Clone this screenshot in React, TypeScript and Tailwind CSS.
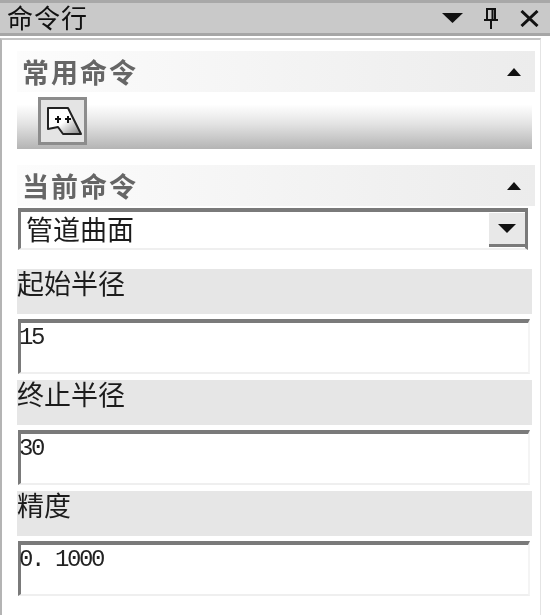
import React from 'react';

const cjk = "font-['Noto_Sans_CJK_SC','Noto_Sans',sans-serif]";

const fields = [
  { label: '起始半径', value: '15' },
  { label: '终止半径', value: '30' },
  { label: '精度', value: '0. 1000' },
];

function SectionHeader({ title }: { title: string }) {
  return (
    <div className="flex h-[41px] items-center justify-between bg-gradient-to-r from-[#fcfcfc] to-[#ececec] pl-[5px] pr-[14px]">
      <span className="text-[27px] leading-none font-bold tracking-[2px] text-[#666666]">{title}</span>
      <svg width="14" height="8" viewBox="0 0 14 8">
        <path d="M7 0L14 8H0Z" fill="#111" />
      </svg>
    </div>
  );
}

function CommandIcon() {
  return (
    <svg width="41" height="34" viewBox="0 0 41 34">
      <defs>
        <linearGradient id="cmdFill" x1="0" y1="0" x2="1" y2="1">
          <stop offset="0.5" stopColor="#ffffff" />
          <stop offset="0.95" stopColor="#8c8c8c" />
        </linearGradient>
      </defs>
      <path d="M6 4H26L39 30H21L16 23L6 25Z" fill="url(#cmdFill)" stroke="#222" strokeWidth="2" strokeLinejoin="round" />
      <path d="M13 15H19M16 12V19M23 15H29M26 12V19" stroke="#111" strokeWidth="2" />
    </svg>
  );
}

function Field({ label, value }: { label: string; value: string }) {
  return (
    <div className="mb-[6px]">
      <div className="h-[45px] w-[515px] bg-[#e6e6e6] text-[27px] leading-[28px] text-[#1c1c1c]">{label}</div>
      <div className="mt-[5px] ml-px h-[55px] w-[512px] border-t-[4px] border-l-[3px] border-b-2 border-r-2 border-t-[#7a7a7a] border-l-[#7a7a7a] border-b-[#efefef] border-r-[#f4f4f4] bg-white font-['Liberation_Mono',monospace] text-[24px] leading-[30px] tracking-[-2.4px] text-[#222222]">
        <span className="-ml-[2px]">{value}</span>
      </div>
    </div>
  );
}

export default function App() {
  return (
    <div className={`flex h-[615px] w-[550px] flex-col overflow-hidden bg-[#f4f4f4] blur-[0.5px] ${cjk}`}>
      {/* title bar */}
      <div className="flex h-[36px] shrink-0 items-center justify-between border-t-[3px] border-b-[3px] border-t-[#a8a8a8] border-b-[#a6a6a6] bg-[#c9c9c9] pl-[7px] pr-[11px]">
        <span className="-mt-[2px] text-[26px] leading-[28px] tracking-[1px] text-[#111111]">命令行</span>
        <div className="flex items-center">
          <svg width="21" height="10" viewBox="0 0 21 10">
            <path d="M0 0H21L10.5 10Z" fill="#111" />
          </svg>
          <svg className="ml-[20px]" width="16" height="21" viewBox="0 0 16 21">
            <path d="M1 12H15M4 1H12V12H4ZM9.5 1V12M8 12V21" fill="none" stroke="#111" strokeWidth="2" />
          </svg>
          <svg className="ml-[21px]" width="19" height="17" viewBox="0 0 19 17">
            <path d="M1.5 1L17.5 16M17.5 1L1.5 16" fill="none" stroke="#111" strokeWidth="3" />
          </svg>
        </div>
      </div>

      {/* panel */}
      <div className="flex-1 bg-white pt-[2px]">
        <div className="h-full w-[541px] border-t-[2px] border-l-[2px] border-t-[#c4c4c4] border-l-[#b4b4b4] border-r border-r-[#e4e4e4] bg-white pt-[11px] pl-[15px]">
          <div className="w-[518px]">
            <SectionHeader title="常用命令" />
          </div>
          <div className="flex h-[57px] w-[515px] items-center bg-[linear-gradient(to_bottom,#ffffff_0%,#ffffff_22%,#e4e4e4_55%,#b4b4b4_100%)] pl-[21px]">
            <div className="flex h-[48px] w-[49px] items-center justify-center border-[3px] border-[#8c8c8c] bg-[#e4e4e4]">
              <CommandIcon />
            </div>
          </div>

          <div className="mt-[16px] w-[518px]">
            <SectionHeader title="当前命令" />
          </div>
          <div className="mt-[2px] ml-px flex h-[42px] w-[510px] items-center justify-between border-t-[4px] border-l-[3px] border-r-[3px] border-b-[2px] border-t-[#7a7a7a] border-l-[#7a7a7a] border-r-[#7a7a7a] border-b-[#efefef] bg-white pl-[5px]">
            <span className="pb-[3px] text-[27px] leading-none text-[#1c1c1c]">管道曲面</span>
            <div className="flex h-[34px] w-[36px] items-center justify-center border-b-[3px] border-b-[#7a7a7a] bg-[#e8e8e8]">
              <svg width="18" height="9" viewBox="0 0 18 9">
                <path d="M0 0H18L9 9Z" fill="#111" />
              </svg>
            </div>
          </div>

          <div className="mt-[19px]">
            {fields.map((f) => (
              <Field key={f.label} label={f.label} value={f.value} />
            ))}
          </div>
        </div>
      </div>
    </div>
  );
}
